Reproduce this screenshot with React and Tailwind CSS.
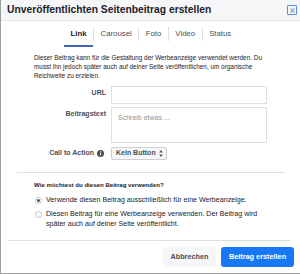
import React, { useState } from "react";

const tabs = ["Link", "Carousel", "Foto", "Video", "Status"];

function InfoIcon() {
  return (
    <svg width="7" height="7" viewBox="0 0 16 16" className="inline-block">
      <circle cx="8" cy="8" r="8" fill="#4b4f56" />
      <rect x="6.9" y="6.8" width="2.2" height="5.4" fill="#fff" />
      <circle cx="8" cy="4.4" r="1.3" fill="#fff" />
    </svg>
  );
}

function SortIcon() {
  return (
    <svg width="4" height="7" viewBox="0 0 8 14" className="shrink-0">
      <path d="M4 0L7.5 5H0.5Z M4 14L0.5 9H7.5Z" fill="#4b4f56" />
    </svg>
  );
}

function Radio({ checked }) {
  return (
    <span className="w-[7px] h-[7px] rounded-full border border-[#bec3c9] bg-white flex items-center justify-center shrink-0">
      {checked && <span className="w-[3px] h-[3px] rounded-full bg-[#4b4f56]" />}
    </span>
  );
}

function App() {
  const [active, setActive] = useState("Link");
  const [usage, setUsage] = useState("ad");

  return (
    <div
      className="w-[300px] h-[274px] bg-white border-l border-b border-[#9d9d9d] flex flex-col text-[#1d2129] overflow-hidden"
      style={{ fontFamily: '"Liberation Sans", Arial, sans-serif' }}
    >
      {/* Header */}
      <div className="h-[21px] shrink-0 bg-[#f5f6f7] border-b border-[#e5e5e5] flex items-center justify-between pl-[6px] pr-[3px]">
        <span className="text-[10.3px] font-bold text-[#1d2129] whitespace-nowrap">
          Unveröffentlichten Seitenbeitrag erstellen
        </span>
        <button className="w-[10px] h-[10px] border border-[#5b8cf0] rounded-[1px] flex items-center justify-center">
          <svg width="5" height="5" viewBox="0 0 10 10">
            <path d="M1 1L9 9M9 1L1 9" stroke="#a0a5ad" strokeWidth="2.4" />
          </svg>
        </button>
      </div>

      {/* Tabs */}
      <div className="h-[26px] shrink-0 flex items-stretch pl-[63px]">
        {tabs.map((t, i) => (
          <div key={t} className="flex items-center">
            {i > 0 && <div className="w-px h-[14px] bg-[#dddfe2]" />}
            <button
              onClick={() => setActive(t)}
              className={`relative h-full px-[6.5px] text-[7.8px] whitespace-nowrap ${
                active === t ? "font-bold text-[#1d2129]" : "text-[#4b4f56]"
              }`}
            >
              {t}
              {active === t && (
                <span className="absolute left-0 right-0 bottom-0 h-[2px] bg-[#4267b2]" />
              )}
            </button>
          </div>
        ))}
      </div>

      {/* Body */}
      <p className="pl-[33px] pt-[6px] text-[6.4px] leading-[9px] text-[#1d2129] whitespace-nowrap">
        Dieser Beitrag kann für die Gestaltung der Werbeanzeige verwendet werden. Du
        <br />
        musst ihn jedoch später auch auf deiner Seite veröffentlichen, um organische
        <br />
        Reichweite zu erzielen.
      </p>

      <div className="grid grid-cols-[105px_156px] gap-x-[5px] mt-[6px]">
        <label className="h-[18px] text-[7px] font-bold text-[#4b4f56] text-right pt-[2px]">URL</label>
        <input className="h-[18px] border border-[#dddfe2] outline-none text-[7px] px-[6px]" />

        <label className="mt-[3px] text-[7px] font-bold text-[#4b4f56] text-right pt-[2px]">
          Beitragstext
        </label>
        <textarea
          placeholder="Schreib etwas ..."
          className="mt-[3px] h-[36px] border border-[#dddfe2] outline-none resize-none text-[7px] leading-[9px] px-[6px] py-[5px] placeholder:text-[#90949c]"
        />

        <label className="mt-[4px] h-[13px] text-[7px] font-bold text-[#4b4f56] flex items-center justify-end gap-[3px] pr-[2px]">
          Call to Action <InfoIcon />
        </label>
        <div className="mt-[4px]">
          <button className="h-[13px] pl-[4px] pr-[3px] bg-[#f5f6f7] border border-[#ccd0d5] rounded-[2px] text-[7px] font-bold text-[#4b4f56] flex items-center gap-[3px] whitespace-nowrap">
            Kein Button
            <SortIcon />
          </button>
        </div>
      </div>

      <div className="ml-[16px] mr-[15px] mt-[12px] border-t border-[#dddfe2]" />

      <div className="pl-[33px] pt-[8px] whitespace-nowrap">
        <div className="text-[6.1px] leading-[8px] font-bold text-[#1d2129]">
          Wie möchtest du diesen Beitrag verwenden?
        </div>
        <label className="flex items-center gap-[4px] mt-[6px] h-[10px] pl-[1px]" onClick={() => setUsage("ad")}>
          <Radio checked={usage === "ad"} />
          <span className="text-[7.1px] text-[#1d2129]">
            Verwende diesen Beitrag ausschließlich für eine Werbeanzeige.
          </span>
        </label>
        <label className="flex items-start gap-[4px] mt-[4px] pl-[1px]" onClick={() => setUsage("both")}>
          <span className="mt-[1.5px]">
            <Radio checked={usage === "both"} />
          </span>
          <span className="text-[7.1px] leading-[10px] text-[#1d2129]">
            Diesen Beitrag für eine Werbeanzeige verwenden. Der Beitrag wird
            <br />
            später auch auf deiner Seite veröffentlicht.
          </span>
        </label>
      </div>

      <div className="ml-[7px] mr-[10px] mt-auto border-t border-[#dddfe2]" />

      <div className="h-[32px] shrink-0 flex items-center justify-end gap-[5px] pr-[6px]">
        <button className="h-[20px] w-[53px] rounded-[3px] bg-[#f5f6f7] text-[7.3px] font-bold text-[#4b4f56]">
          Abbrechen
        </button>
        <button className="h-[20px] w-[73px] rounded-[3px] bg-[#1877f2] text-[7.3px] font-bold text-white">
          Beitrag erstellen
        </button>
      </div>
    </div>
  );
}

export default App;
